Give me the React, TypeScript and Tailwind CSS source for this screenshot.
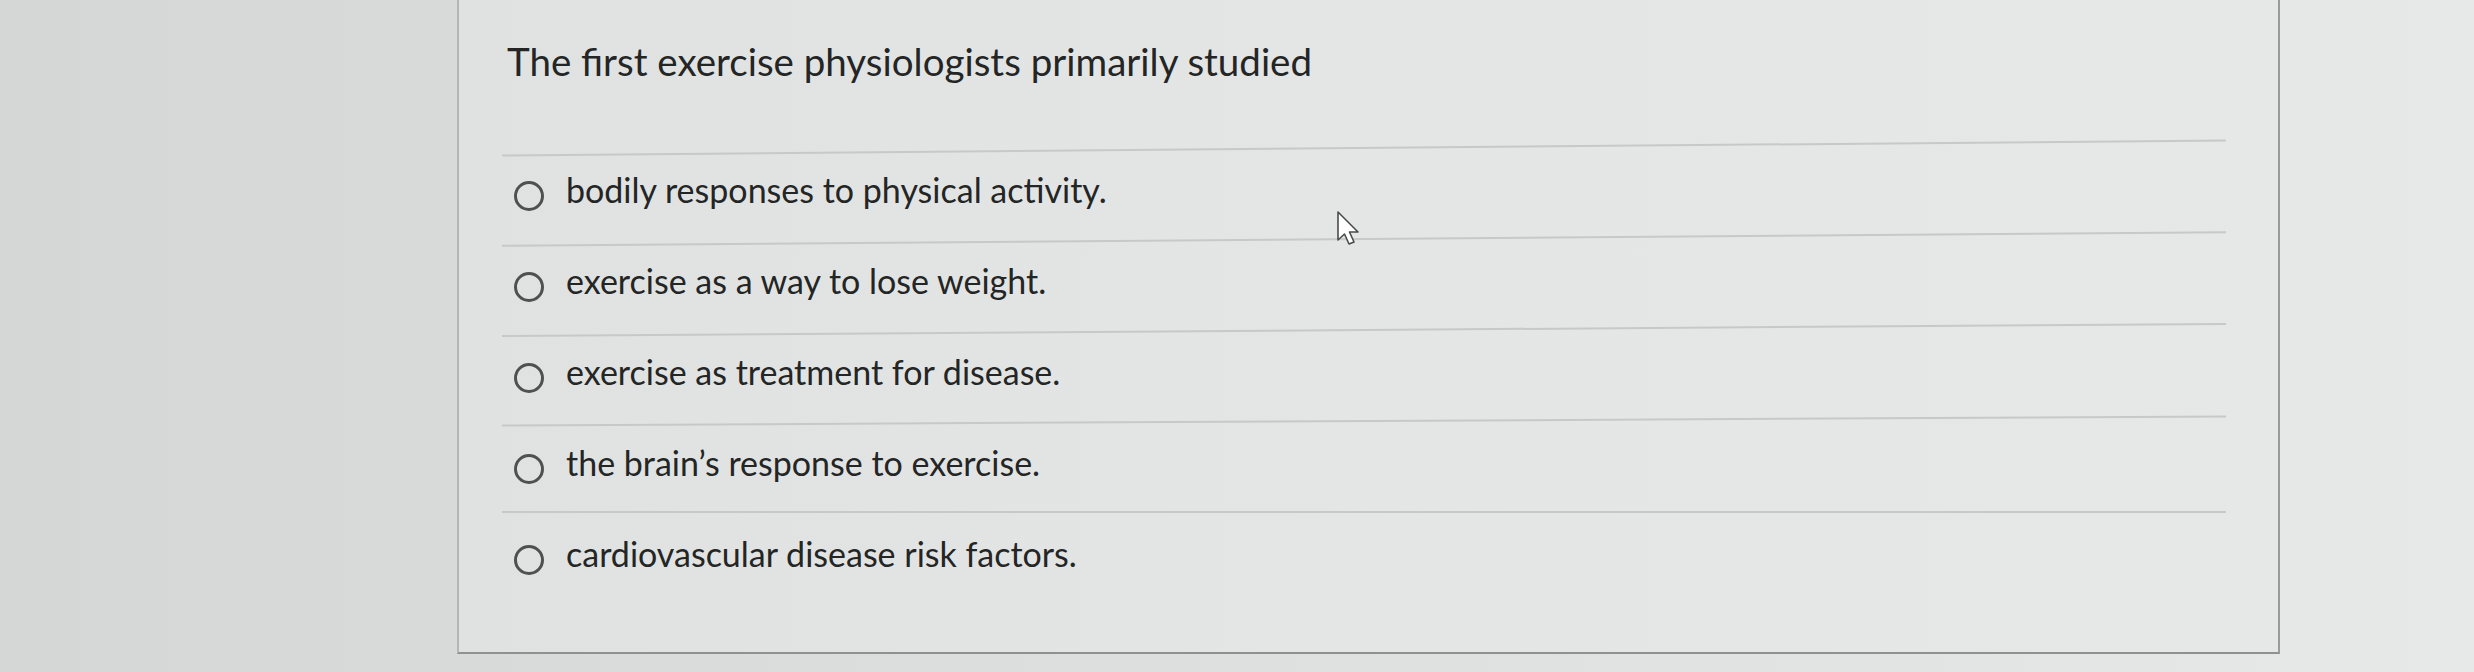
import React from "react";

const options = [
  { text: "bodily responses to physical activity.", rot: "-rotate-[0.5deg]" },
  { text: "exercise as a way to lose weight.", rot: "-rotate-[0.45deg]" },
  { text: "exercise as treatment for disease.", rot: "-rotate-[0.4deg]" },
  { text: "the brain\u2019s response to exercise.", rot: "-rotate-[0.3deg]" },
  { text: "cardiovascular disease risk factors.", rot: "" },
];

function Radio() {
  return (
    <span className="mt-[11px] block h-[30px] w-[30px] shrink-0 rounded-full border-[3px] border-[#4f5151]" />
  );
}

export default function App() {
  return (
    <div
      className="relative flex h-[672px] w-[2474px] overflow-hidden bg-gradient-to-r from-[#d4d7d6] via-[#dde0df] to-[#e7e8e8] pl-[457px] text-[#242525]"
      style={{ fontFamily: "Lato, 'Noto Sans', sans-serif" }}
    >
      <div className="flex h-[654px] w-[1823px] flex-col border-b-2 border-l-2 border-r-2 border-b-[#8f9191] border-l-[#b3b6b5] border-r-[#9a9c9b] bg-gradient-to-r from-[#dfe2e1] via-[#e4e6e5] to-[#e6e8e7] pl-[43px] pr-[52px]">
        <div className="pl-[5px] pt-[38px] text-[38.5px] leading-[46px]">
          The first exercise physiologists primarily studied
        </div>
        <div className="mt-[63px] flex flex-col">
          {options.map((o, i) => (
            <div key={i} className="flex flex-col">
              <div className={`h-[2px] bg-[#c6c9c8] ${o.rot}`} />
              <div className="flex items-start gap-[22px] pl-[12px] pt-[21px] pb-[27px] text-[34px] leading-[40px]">
                <Radio />
                <span>{o.text}</span>
              </div>
            </div>
          ))}
        </div>
      </div>
      <svg
        className="absolute left-[1336px] top-[210px]"
        width="26"
        height="38"
        viewBox="0 0 26 38"
      >
        <path
          d="M2 2 L2 30 L8.5 24 L13 34 L18 32 L13.5 22 L22 22 Z"
          fill="#ffffff"
          stroke="#4a4c4c"
          strokeWidth="1.6"
          strokeLinejoin="round"
        />
      </svg>
    </div>
  );
}
